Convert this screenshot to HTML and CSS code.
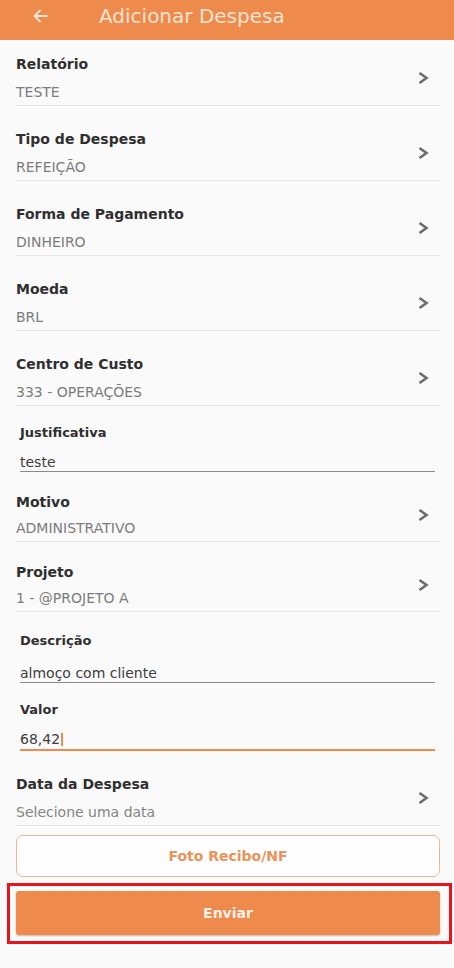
FILE: index.html
```html
<!DOCTYPE html>
<html lang="pt-BR">
<head>
    <meta charset="UTF-8">
    <meta name="viewport" content="width=device-width, initial-scale=1.0">
    <title>Adicionar Despesa</title>
    <link rel="stylesheet" href="styles.css">
</head>
<body>
    <header class="topbar">
        <button class="back" type="button" aria-label="Voltar">
            <svg width="16" height="16" viewBox="0 0 16 16"><path d="M15 8H2.5M8 2.5L2.5 8L8 13.5" fill="none" stroke="currentColor" stroke-width="2" stroke-linecap="round" stroke-linejoin="round"/></svg>
        </button>
        <h1>Adicionar Despesa</h1>
    </header>

    <main class="content">
        <!-- Campos de seleção -->
        <div class="row row-first">
            <div class="row-text">
                <div class="label">Relatório</div>
                <div class="value">TESTE</div>
            </div>
            <svg class="chevron" width="14" height="14" viewBox="0 0 14 14"><path d="M3.5 2l7 5-7 5" fill="none" stroke="currentColor" stroke-width="2.6"/></svg>
        </div>
        <div class="row">
            <div class="row-text">
                <div class="label">Tipo de Despesa</div>
                <div class="value">REFEIÇÃO</div>
            </div>
            <svg class="chevron" width="14" height="14" viewBox="0 0 14 14"><path d="M3.5 2l7 5-7 5" fill="none" stroke="currentColor" stroke-width="2.6"/></svg>
        </div>
        <div class="row">
            <div class="row-text">
                <div class="label">Forma de Pagamento</div>
                <div class="value">DINHEIRO</div>
            </div>
            <svg class="chevron" width="14" height="14" viewBox="0 0 14 14"><path d="M3.5 2l7 5-7 5" fill="none" stroke="currentColor" stroke-width="2.6"/></svg>
        </div>
        <div class="row">
            <div class="row-text">
                <div class="label">Moeda</div>
                <div class="value">BRL</div>
            </div>
            <svg class="chevron" width="14" height="14" viewBox="0 0 14 14"><path d="M3.5 2l7 5-7 5" fill="none" stroke="currentColor" stroke-width="2.6"/></svg>
        </div>
        <div class="row">
            <div class="row-text">
                <div class="label">Centro de Custo</div>
                <div class="value">333 - OPERAÇÕES</div>
            </div>
            <svg class="chevron" width="14" height="14" viewBox="0 0 14 14"><path d="M3.5 2l7 5-7 5" fill="none" stroke="currentColor" stroke-width="2.6"/></svg>
        </div>

        <div class="field">
            <label class="field-label" for="justificativa">Justificativa</label>
            <input class="field-input" id="justificativa" type="text" value="teste">
        </div>

        <div class="row row-compact">
            <div class="row-text">
                <div class="label">Motivo</div>
                <div class="value">ADMINISTRATIVO</div>
            </div>
            <svg class="chevron" width="14" height="14" viewBox="0 0 14 14"><path d="M3.5 2l7 5-7 5" fill="none" stroke="currentColor" stroke-width="2.6"/></svg>
        </div>
        <div class="row row-compact">
            <div class="row-text">
                <div class="label">Projeto</div>
                <div class="value">1 - @PROJETO A</div>
            </div>
            <svg class="chevron" width="14" height="14" viewBox="0 0 14 14"><path d="M3.5 2l7 5-7 5" fill="none" stroke="currentColor" stroke-width="2.6"/></svg>
        </div>

        <div class="field field-spaced">
            <label class="field-label" for="descricao">Descrição</label>
            <input class="field-input" id="descricao" type="text" value="almoço com cliente">
        </div>
        <div class="field field-active">
            <label class="field-label" for="valor">Valor</label>
            <div class="field-input">68,42<span class="caret"></span></div>
        </div>

        <div class="row">
            <div class="row-text">
                <div class="label">Data da Despesa</div>
                <div class="value value-hint">Selecione uma data</div>
            </div>
            <svg class="chevron" width="14" height="14" viewBox="0 0 14 14"><path d="M3.5 2l7 5-7 5" fill="none" stroke="currentColor" stroke-width="2.6"/></svg>
        </div>

        <button class="btn-outline" type="button">Foto Recibo/NF</button>

        <!-- destaque em vermelho -->
        <div class="highlight">
            <button class="btn-primary" type="button">Enviar</button>
        </div>
    </main>
</body>
</html>
```

FILE: styles.css
```css
body {
    margin: 0;
    background-color: #fafafa;
    font-family: "DejaVu Sans", "Liberation Sans", sans-serif;
    color: #333;
}

.topbar {
    display: flex;
    align-items: center;
    height: 40px;
    box-sizing: border-box;
    padding: 4px 0 12px 32px;
    background-color: #ee8a4c;
    color: #fde3d1;
}

.back {
    display: flex;
    padding: 0;
    border: none;
    background: none;
    color: inherit;
    cursor: pointer;
}

.topbar h1 {
    margin: 0 0 0 51px;
    font-size: 20px;
    font-weight: normal;
    line-height: 24px;
}

.content {
    padding: 0 14px 0 16px;
}

/* Linhas com seta */
.row {
    display: flex;
    align-items: center;
    padding: 24px 10px 4px 0;
    border-bottom: 1px solid #e3e3e3;
}

.row-first {
    padding-top: 15px;
}

.row-compact {
    padding-top: 21px;
}

.row-text {
    flex: 1;
}

.label {
    font-size: 14px;
    font-weight: bold;
    line-height: 18px;
    color: #2f2f2f;
}

.value {
    margin-top: 10px;
    font-size: 14px;
    line-height: 18px;
    color: #7c7c7c;
}

.row-compact .value {
    margin-top: 8px;
}

.value-hint {
    color: #858585;
}

.chevron {
    color: #6c6c6c;
}

/* Campos de texto */
.field {
    display: flex;
    flex-direction: column;
    margin: 0 5px 0 4px;
    padding-top: 19px;
}

.field-label {
    font-size: 13px;
    font-weight: bold;
    line-height: 16px;
    color: #2f2f2f;
}

.field-input {
    margin-top: 13px;
    padding: 0 0 1px;
    border: none;
    border-bottom: 1px solid #8a8a8a;
    background: none;
    font-family: inherit;
    font-size: 14px;
    line-height: 16px;
    color: #3d3d3d;
    outline: none;
}

.field-spaced {
    padding-top: 21px;
}

.field-spaced .field-input {
    margin-top: 16px;
}

.field-active .field-input {
    padding-bottom: 2px;
    border-bottom: 2px solid #ee8a4c;
}

.caret {
    display: inline-block;
    width: 2px;
    height: 13px;
    margin-left: 1px;
    vertical-align: -2px;
    background-color: #ee8a4c;
}

/* Botões */
.btn-outline {
    display: block;
    width: 100%;
    height: 42px;
    margin-top: 9px;
    border: 1.5px solid #e8b894;
    border-radius: 7px;
    background-color: #fdfdfd;
    font-family: inherit;
    font-size: 14px;
    font-weight: bold;
    color: #e8935a;
    cursor: pointer;
}

.highlight {
    margin: 6px -12px 0 -9px;
    padding: 5px 9px 6px 6px;
    border: 3px solid #e8141c;
}

.btn-primary {
    display: block;
    width: 100%;
    height: 44px;
    border: none;
    border-radius: 3px;
    background-color: #ee8a4c;
    box-shadow: 0 1px 2px rgba(0, 0, 0, 0.25);
    font-family: inherit;
    font-size: 14px;
    font-weight: bold;
    color: #fdf0e6;
    cursor: pointer;
}
```
